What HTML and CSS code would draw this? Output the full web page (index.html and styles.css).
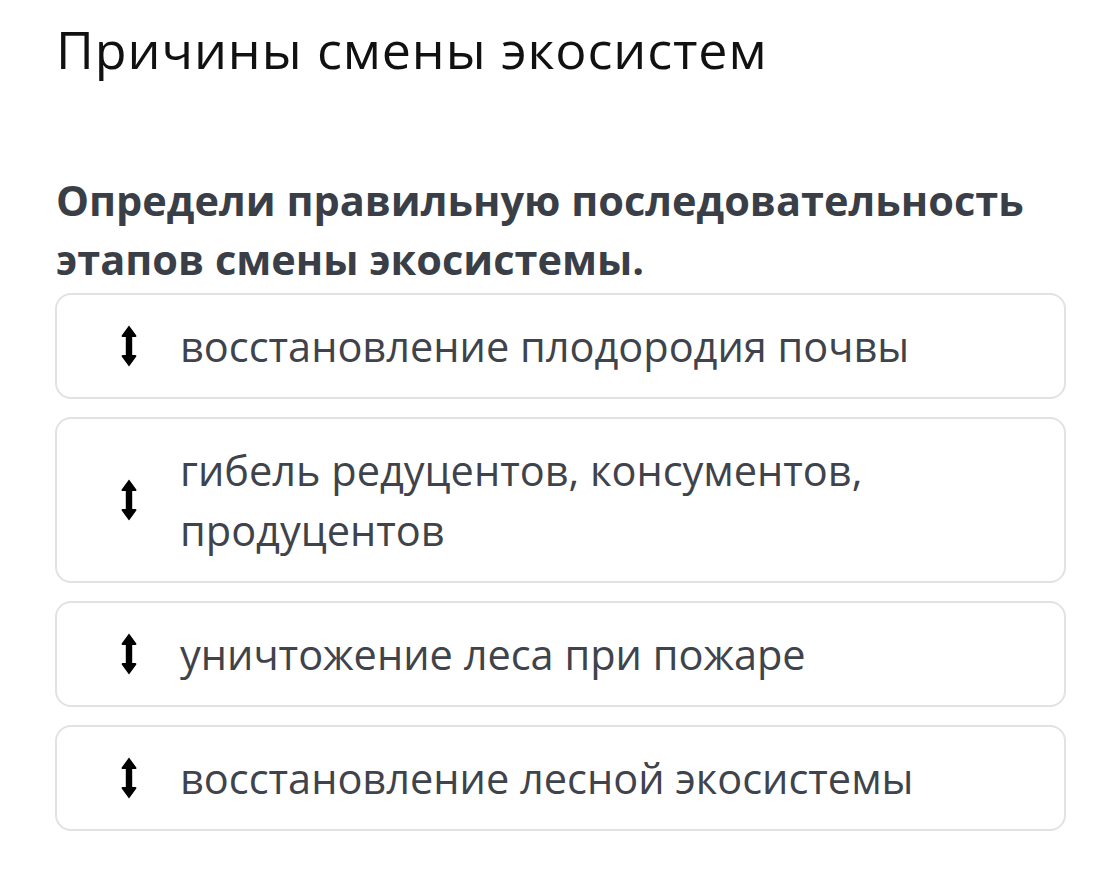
FILE: index.html
```html
<!DOCTYPE html>
<html lang="ru">
<head>
    <meta charset="UTF-8">
    <meta name="viewport" content="width=device-width, initial-scale=1.0">
    <title>Причины смены экосистем</title>
    <link rel="stylesheet" href="styles.css">
</head>
<body>
    <div class="task">
        <h1 class="task-title">Причины смены экосистем</h1>
        <p class="question">Определи правильную последовательность этапов смены экосистемы.</p>

        <ul class="sort-list">
            <li class="sort-item">
                <svg class="drag-icon" viewBox="0 0 16 42" width="16" height="42"><path d="M8 0.5 L15.3 10.5 Q15.8 12 14.3 12 L11.2 12 L11.2 30 L14.3 30 Q15.8 30 15.3 31.5 L8 41.5 L0.7 31.5 Q0.2 30 1.7 30 L4.8 30 L4.8 12 L1.7 12 Q0.2 12 0.7 10.5 Z" fill="#000"/></svg>
                <span class="item-text">восстановление плодородия почвы</span>
            </li>
            <li class="sort-item">
                <svg class="drag-icon" viewBox="0 0 16 42" width="16" height="42"><path d="M8 0.5 L15.3 10.5 Q15.8 12 14.3 12 L11.2 12 L11.2 30 L14.3 30 Q15.8 30 15.3 31.5 L8 41.5 L0.7 31.5 Q0.2 30 1.7 30 L4.8 30 L4.8 12 L1.7 12 Q0.2 12 0.7 10.5 Z" fill="#000"/></svg>
                <span class="item-text">гибель редуцентов, консументов, продуцентов</span>
            </li>
            <li class="sort-item">
                <svg class="drag-icon" viewBox="0 0 16 42" width="16" height="42"><path d="M8 0.5 L15.3 10.5 Q15.8 12 14.3 12 L11.2 12 L11.2 30 L14.3 30 Q15.8 30 15.3 31.5 L8 41.5 L0.7 31.5 Q0.2 30 1.7 30 L4.8 30 L4.8 12 L1.7 12 Q0.2 12 0.7 10.5 Z" fill="#000"/></svg>
                <span class="item-text">уничтожение леса при пожаре</span>
            </li>
            <li class="sort-item">
                <svg class="drag-icon" viewBox="0 0 16 42" width="16" height="42"><path d="M8 0.5 L15.3 10.5 Q15.8 12 14.3 12 L11.2 12 L11.2 30 L14.3 30 Q15.8 30 15.3 31.5 L8 41.5 L0.7 31.5 Q0.2 30 1.7 30 L4.8 30 L4.8 12 L1.7 12 Q0.2 12 0.7 10.5 Z" fill="#000"/></svg>
                <span class="item-text">восстановление лесной экосистемы</span>
            </li>
        </ul>
    </div>
</body>
</html>
```

FILE: styles.css
```css
/* Задание: упорядочить этапы */
body {
    margin: 0;
    background-color: #ffffff;
    font-family: "Open Sans", "Noto Sans", sans-serif;
}

.task {
    padding: 13px 54px 40px 55px;
}

.task-title {
    margin: 0 0 0 1px;
    font-size: 52px;
    font-weight: 400;
    letter-spacing: 0.9px;
    line-height: 72px;
    color: #111111;
}

.question {
    margin: 86px 0 4px 1px;
    font-size: 41.5px;
    font-weight: 700;
    line-height: 59px;
    color: #3a3e47;
}

.sort-list {
    list-style: none;
    margin: 0;
    padding: 0;
    display: flex;
    flex-direction: column;
    gap: 18px;
}

.sort-item {
    display: flex;
    align-items: center;
    gap: 43px;
    padding: 21px 40px 21px 64px;
    border: 2px solid #e2e2e4;
    border-radius: 16px;
}

.drag-icon {
    flex-shrink: 0;
}

.item-text {
    font-size: 41.5px;
    line-height: 60px;
    color: #3f434b;
}
```
